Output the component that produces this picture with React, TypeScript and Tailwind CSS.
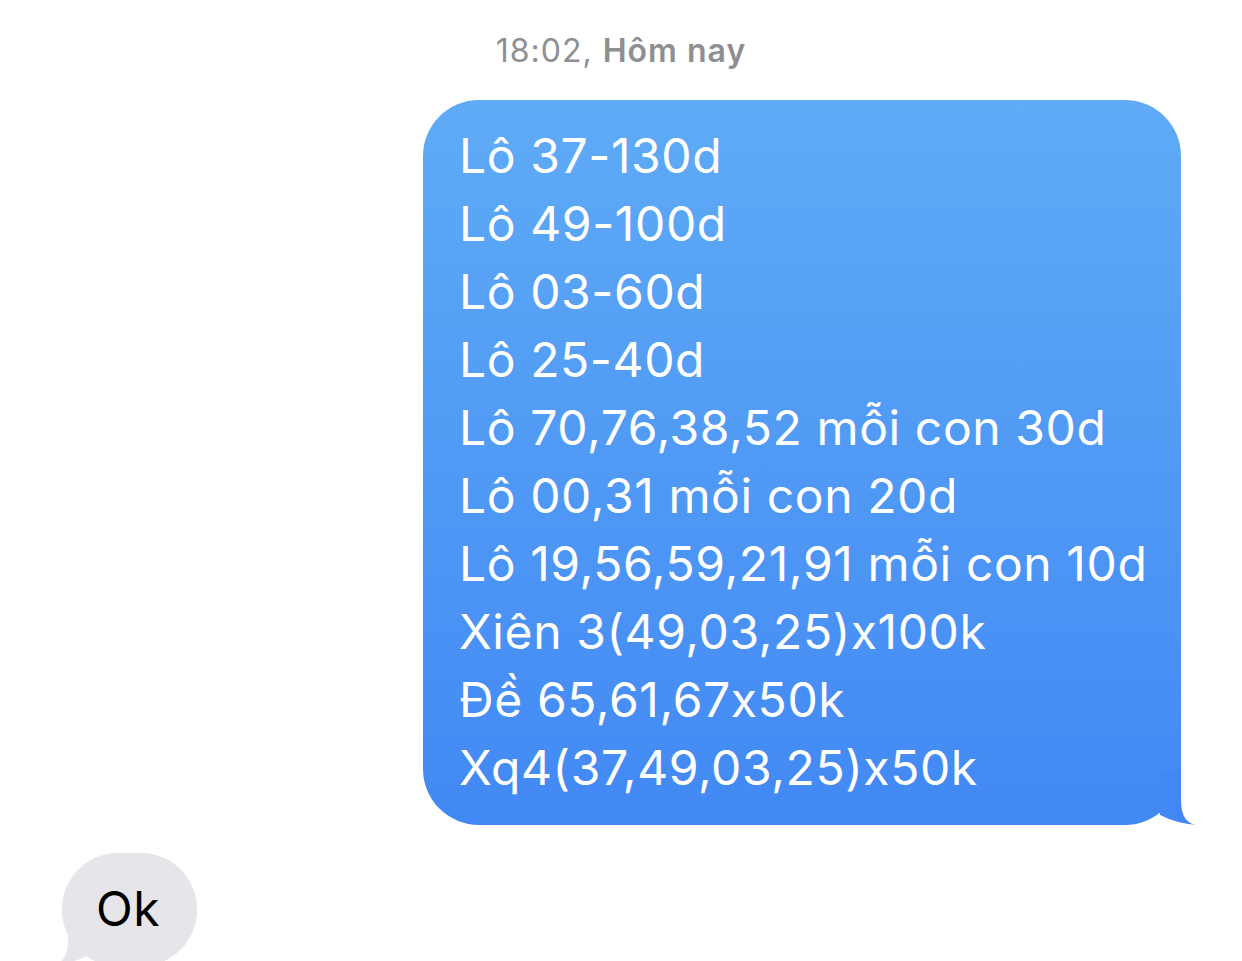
import React from "react";

const lines = [
  "Lô 37-130d",
  "Lô 49-100d",
  "Lô 03-60d",
  "Lô 25-40d",
  "Lô 70,76,38,52 mỗi con 30d",
  "Lô 00,31 mỗi con 20d",
  "Lô 19,56,59,21,91 mỗi con 10d",
  "Xiên 3(49,03,25)x100k",
  "Đề 65,61,67x50k",
  "Xq4(37,49,03,25)x50k",
];

export default function App() {
  return (
    <div
      className="w-[1242px] h-[961px] overflow-hidden bg-white flex flex-col"
      style={{ fontFamily: "Inter, 'Noto Sans', sans-serif" }}
    >
      <div className="pt-[31px] h-[71px] text-center text-[32px] leading-[40px] text-[#8e8e93] tracking-[1px]">
        <span>18:02, </span>
        <span className="font-semibold">Hôm nay</span>
      </div>

      <div className="mt-[29px] flex justify-end pr-[61px]">
        <div className="relative">
          <div className="relative z-10 w-[758px] rounded-[56px] bg-gradient-to-b from-[#5fabf6] to-[#4288f4] pl-[36px] pt-[22px] pb-[23px] text-white text-[48px] leading-[68px] whitespace-nowrap tracking-[0.6px]">
            {lines.map((l) => (
              <div key={l}>{l}</div>
            ))}
          </div>
          <svg
            className="absolute z-20 left-[717px] top-[670px]"
            width="60"
            height="56"
            viewBox="0 0 60 56"
          >
            <path d="M41 0 L41 30 Q41 55 59 55 Q37 54 20 45 L20 0 Z" fill="#4288f4" />
          </svg>
        </div>
      </div>

      <div className="mt-[28px] pl-[62px]">
        <div className="relative w-fit">
          <div className="relative z-10 w-[135px] h-[113px] rounded-[56px] bg-[#e5e5ea] pl-[34px] pt-[22px] text-black text-[48px] leading-[68px] tracking-[0.6px]">
            Ok
          </div>
          <svg
            className="absolute z-20 left-[-13px] top-[57px]"
            width="60"
            height="56"
            viewBox="0 0 60 56"
          >
            <path d="M19 0 L19 30 Q19 55 1 55 Q23 54 40 45 L40 0 Z" fill="#e5e5ea" />
          </svg>
        </div>
      </div>
    </div>
  );
}
